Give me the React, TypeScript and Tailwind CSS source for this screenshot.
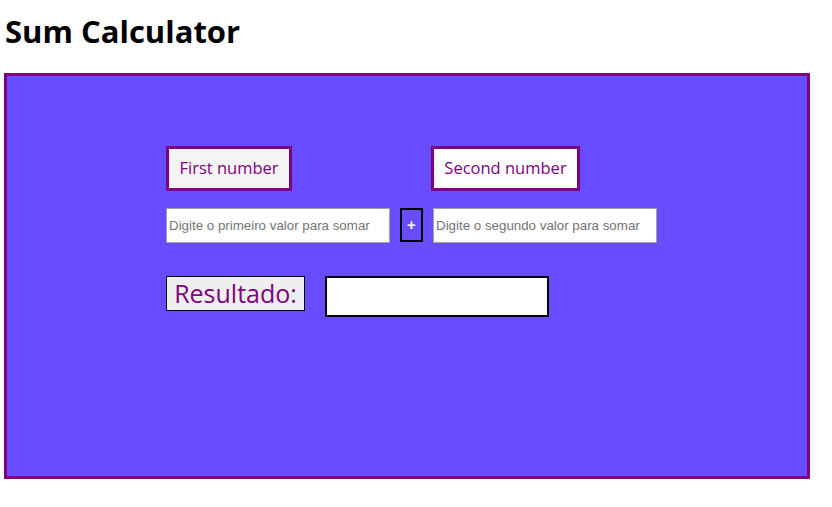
import React from "react";

const App = () => {
  return (
    <div className="w-[832px] h-[507px] bg-white font-['Open_Sans',sans-serif]">
      <h1 className="pl-[5px] pt-[9px] h-[73px] text-[31px] leading-[44px] font-bold text-black">
        Sum Calculator
      </h1>

      <div className="ml-[4px] w-[806px] h-[406px] border-[3px] border-[#800080] bg-[#684cff] pl-[159px] pt-[70px]">
        {/* Labels */}
        <div className="flex items-center h-[45px]">
          <div className="w-[126px] h-[45px] flex items-center justify-center border-[3px] border-[#800080] bg-[#f4f4f4] text-[16.5px] text-[#800080]">
            First number
          </div>
          <div className="ml-[139px] w-[149px] h-[45px] flex items-center justify-center border-[3px] border-[#800080] bg-white text-[16.5px] text-[#800080]">
            Second number
          </div>
        </div>

        {/* Inputs */}
        <div className="flex items-start mt-[17px]">
          <input
            className="w-[224px] h-[35px] border border-[#a0a0a0] bg-white px-[2px] text-[13.33px] font-['Liberation_Sans',sans-serif] placeholder:text-[#757575] outline-none"
            placeholder="Digite o primeiro valor para somar"
          />
          <button className="ml-[10px] w-[23px] h-[34px] border-2 border-black text-white text-[15px] font-bold font-['Liberation_Sans',sans-serif] flex items-center justify-center">
            +
          </button>
          <input
            className="ml-[10px] w-[224px] h-[35px] border border-[#a0a0a0] bg-white px-[2px] text-[13.33px] font-['Liberation_Sans',sans-serif] placeholder:text-[#757575] outline-none"
            placeholder="Digite o segundo valor para somar"
          />
        </div>

        {/* Result */}
        <div className="flex items-start mt-[33px]">
          <div className="w-[139px] h-[35px] border border-black bg-[#efefef] flex items-center justify-center text-[25px] text-[#800080]">
            Resultado:
          </div>
          <div className="ml-[20px] w-[224px] h-[41px] border-2 border-black bg-white"></div>
        </div>
      </div>
    </div>
  );
};

export default App;
